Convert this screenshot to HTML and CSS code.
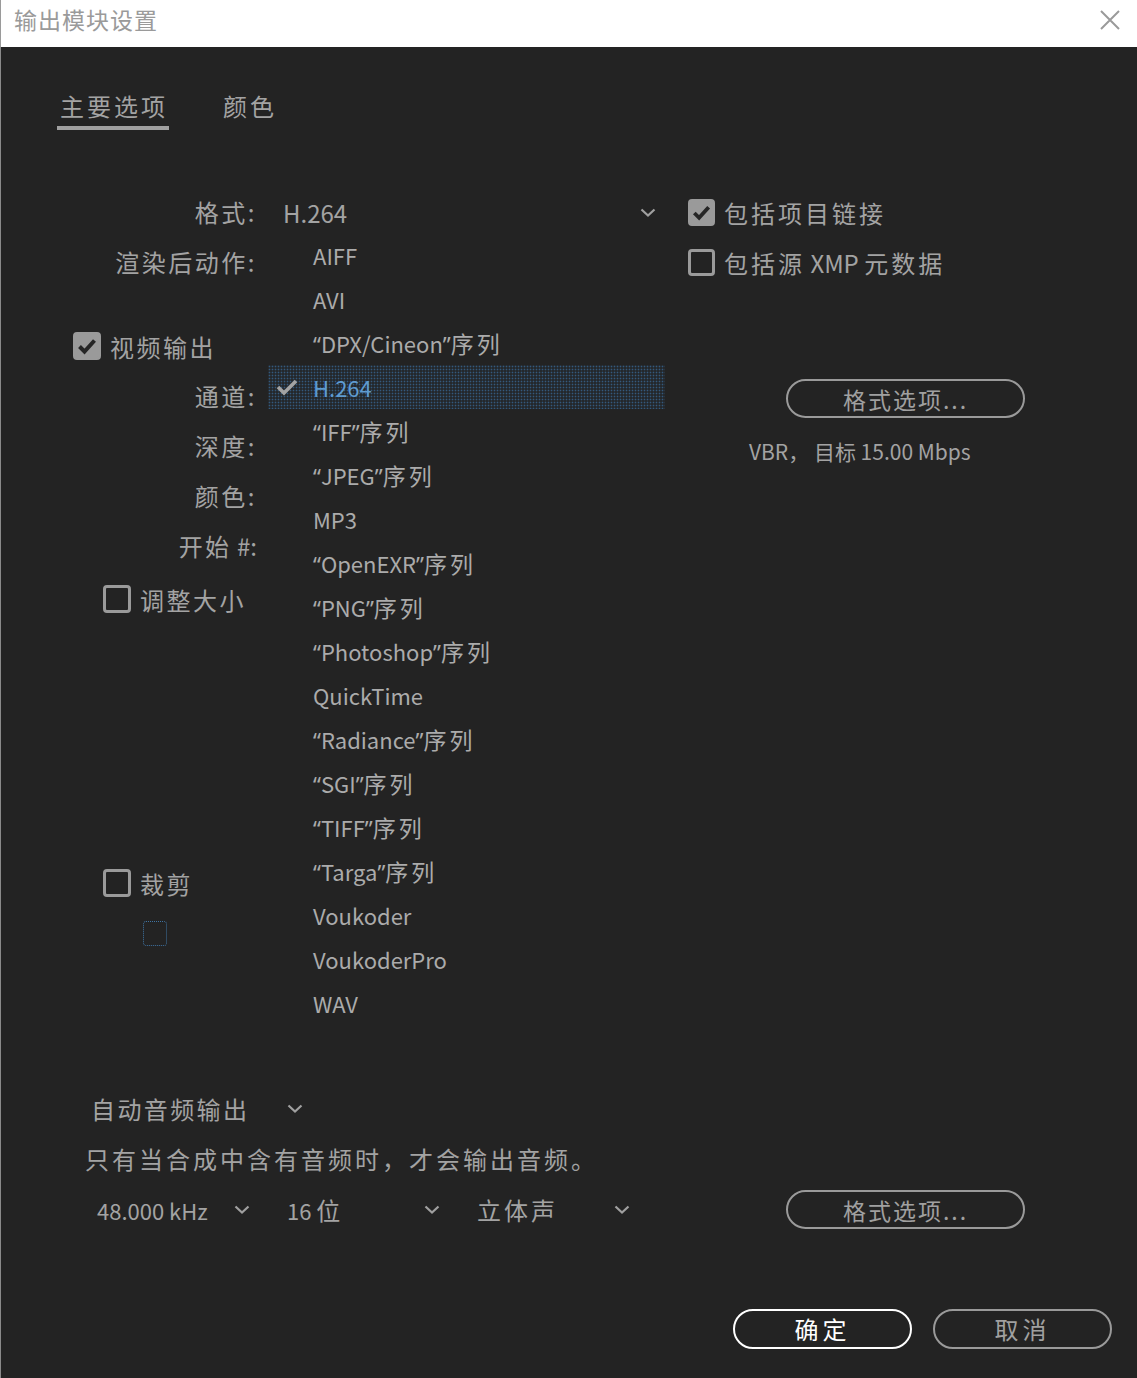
FILE: index.html
```html
<!DOCTYPE html>
<html lang="zh-CN">
<head>
<meta charset="utf-8">
<title>输出模块设置</title>
<link rel="stylesheet" href="styles.css">
</head>
<body>
<div class="titlebar">
  <span class="title">输出模块设置</span>
  <svg class="close" width="20" height="20" viewBox="0 0 20 20"><path d="M1 1L19 19M19 1L1 19" stroke="#9a9a9a" stroke-width="2" fill="none"/></svg>
</div>
<div class="main">
  <div class="tabs">
    <div class="tab active">主要选项</div>
    <div class="tab">颜色</div>
  </div>

  <div class="form">
    <div class="col-left">
      <div class="label r1">格式:</div>
      <div class="label">渲染后动作:</div>
      <div class="cbrow video"><span class="cb on"><svg width="22" height="22" viewBox="0 0 22 22"><path d="M3.5 11.5L8.5 16.5L18.5 5.5" stroke="#262626" stroke-width="4" fill="none"/></svg></span><span class="cjk">视频输出</span></div>
      <div class="label">通道:</div>
      <div class="label">深度:</div>
      <div class="label">颜色:</div>
      <div class="label">开始<span class="hash"> #:</span></div>
      <div class="cbrow resize"><span class="cb"></span><span class="cjk">调整大小</span></div>
      <div class="cbrow crop"><span class="cb"></span><span class="cjk">裁剪</span></div>
      <div class="dotbox"></div>
    </div>

    <div class="col-mid">
      <div class="select-row"><span class="latin">H.264</span>
        <svg class="chev" width="16" height="9" viewBox="0 0 16 9"><path d="M1.5 1.5L8 7.5L14.5 1.5" stroke="#a0a0a0" stroke-width="2.2" fill="none"/></svg>
      </div>
    </div>

    <div class="col-right">
      <div class="cbrow rcb"><span class="cb on small"><svg width="21" height="21" viewBox="0 0 22 22"><path d="M3.5 11.5L8.5 16.5L18.5 5.5" stroke="#262626" stroke-width="4" fill="none"/></svg></span><span class="cjk">包括项目链接</span></div>
      <div class="cbrow rcb"><span class="cb small"></span><span class="cjk">包括源<span class="lat"> XMP </span>元数据</span></div>
      <button class="btn fmt1">格式选项...</button>
      <div class="vbr">VBR， 目标 15.00 Mbps</div>
    </div>
  </div>

  <div class="audio">
    <div class="audio-head"><span class="ah-text">自动音频输出</span>
      <svg class="chev" width="16" height="9" viewBox="0 0 16 9"><path d="M1.5 1.5L8 7.5L14.5 1.5" stroke="#a0a0a0" stroke-width="2.2" fill="none"/></svg>
    </div>
    <div class="note">只有当合成中含有音频时，才会输出音频。</div>
    <div class="audio-row">
      <div class="dd"><span>48.000 kHz</span><svg class="chev" width="16" height="9" viewBox="0 0 16 9"><path d="M1.5 1.5L8 7.5L14.5 1.5" stroke="#a0a0a0" stroke-width="2.2" fill="none"/></svg></div>
      <div class="dd"><span>16 <span class="cjk">位</span></span><svg class="chev" width="16" height="9" viewBox="0 0 16 9"><path d="M1.5 1.5L8 7.5L14.5 1.5" stroke="#a0a0a0" stroke-width="2.2" fill="none"/></svg></div>
      <div class="dd"><span class="cjk">立体声</span><svg class="chev" width="16" height="9" viewBox="0 0 16 9"><path d="M1.5 1.5L8 7.5L14.5 1.5" stroke="#a0a0a0" stroke-width="2.2" fill="none"/></svg></div>
      <button class="btn fmt2">格式选项...</button>
    </div>
  </div>

  <div class="footer">
    <button class="btn ok">确定</button>
    <button class="btn cancel">取消</button>
  </div>
</div>

<ul class="menu">
  <li>AIFF</li>
  <li>AVI</li>
  <li><span class="q">“</span>DPX/Cineon<span class="q">”</span><span class="cj">序列</span></li>
  <li class="sel"><svg class="tick" width="22" height="18" viewBox="0 0 22 18"><path d="M2 9L8 15L20 3" stroke="#a3a3a3" stroke-width="3.6" fill="none"/></svg>H.264</li>
  <li><span class="q">“</span>IFF<span class="q">”</span><span class="cj">序列</span></li>
  <li><span class="q">“</span>JPEG<span class="q">”</span><span class="cj">序列</span></li>
  <li>MP3</li>
  <li><span class="q">“</span>OpenEXR<span class="q">”</span><span class="cj">序列</span></li>
  <li><span class="q">“</span>PNG<span class="q">”</span><span class="cj">序列</span></li>
  <li><span class="q">“</span>Photoshop<span class="q">”</span><span class="cj">序列</span></li>
  <li>QuickTime</li>
  <li><span class="q">“</span>Radiance<span class="q">”</span><span class="cj">序列</span></li>
  <li><span class="q">“</span>SGI<span class="q">”</span><span class="cj">序列</span></li>
  <li><span class="q">“</span>TIFF<span class="q">”</span><span class="cj">序列</span></li>
  <li><span class="q">“</span>Targa<span class="q">”</span><span class="cj">序列</span></li>
  <li>Voukoder</li>
  <li>VoukoderPro</li>
  <li>WAV</li>
</ul>
</body>
</html>
```

FILE: styles.css
```css
html, body {
  margin: 0;
  padding: 0;
}
body {
  width: 1137px;
  height: 1378px;
  background: #232323;
  font-family: "Noto Sans CJK SC", "Noto Sans", sans-serif;
  color: #a3a3a3;
  position: relative;
  overflow: hidden;
}
.titlebar {
  height: 47px;
  background: #ffffff;
  display: flex;
  align-items: center;
  justify-content: space-between;
  padding: 0 17px 0 14px;
  box-shadow: inset 1px 0 0 #9a9a9a;
}
.title {
  font-size: 23px;
  color: #9a9a9a;
  letter-spacing: 1px;
  line-height: 40px;
  margin-top: -9px;
}
.close {
  margin-top: -8px;
}
.main {
  height: 1331px;
  box-shadow: inset 1px 0 0 #8a8a8a;
  display: flex;
  flex-direction: column;
}
.tabs {
  display: flex;
  margin: 44px 0 0 57px;
  gap: 51px;
}
.tab {
  font-size: 24px;
  letter-spacing: 3px;
  line-height: 30px;
  padding: 0 0 5px 3px;
  border-bottom: 4px solid transparent;
  color: #a3a3a3;
}
.tab.active {
  border-bottom-color: #a0a0a0;
  padding-right: 1px;
}
.form {
  display: flex;
  margin-top: 57px;
}
.col-left {
  width: 255px;
  display: flex;
  flex-direction: column;
}
.label {
  height: 50px;
  line-height: 50px;
  text-align: right;
  font-size: 24px;
  letter-spacing: 2.5px;
  margin-right: -2px;
  white-space: nowrap;
}
.hash {
  letter-spacing: 0;
}
.cbrow {
  height: 50px;
  display: flex;
  align-items: center;
  gap: 9px;
  font-size: 24px;
  letter-spacing: 2.5px;
  white-space: nowrap;
}
.cbrow.video { margin-top: 34px; padding-left: 73px; }
.cbrow.resize { margin-top: 3px; padding-left: 103px; }
.cbrow.crop { margin-top: 234px; padding-left: 103px; }
.cb {
  width: 28px;
  height: 28px;
  box-sizing: border-box;
  border: 3px solid #9a9a9a;
  border-radius: 4px;
  display: flex;
  align-items: center;
  justify-content: center;
  flex: none;
}
.cb.small {
  width: 27px;
  height: 27px;
}
.cb.on {
  background: #9a9a9a;
}
.rcb .cjk {
  letter-spacing: 3px;
}
.lat {
  letter-spacing: 0;
}
.dotbox {
  margin: 13px 0 0 143px;
  width: 24px;
  height: 25px;
  box-sizing: border-box;
  border: 1px dotted #3f74a3;
  border-radius: 3px;
}
.col-mid {
  width: 410px;
}
.select-row {
  height: 50px;
  display: flex;
  align-items: center;
  justify-content: space-between;
  padding: 0 9px 0 28px;
  font-size: 24px;
}
.col-right {
  margin-left: 23px;
  display: flex;
  flex-direction: column;
  align-items: flex-start;
}
.rcb { gap: 9px; }
.btn {
  font-family: "Noto Sans CJK SC", "Noto Sans", sans-serif;
  background: transparent;
  color: #a0a0a0;
  border: 2px solid #9a9a9a;
  border-radius: 20px;
  font-size: 23px;
  letter-spacing: 2px;
  padding: 0;
  height: 39px;
  line-height: 34px;
}
.fmt1 {
  width: 239px;
  margin: 92px 0 0 98px;
}
.vbr {
  margin: 18px 0 0 61px;
  font-size: 21px;
  line-height: 30px;
  white-space: nowrap;
}
.audio {
  margin-top: 142px;
  display: flex;
  flex-direction: column;
}
.audio-head {
  height: 40px;
  display: flex;
  align-items: center;
  margin-left: 91px;
  font-size: 24px;
  letter-spacing: 2.4px;
}
.ah-text {
  width: 196px;
}
.note {
  height: 40px;
  line-height: 40px;
  margin: 11px 0 0 85px;
  font-size: 24px;
  letter-spacing: 3px;
}
.audio-row {
  margin-top: 11px;
  display: flex;
  align-items: center;
  padding-left: 97px;
}
.dd {
  width: 153px;
  margin-right: 37px;
  display: flex;
  align-items: center;
  justify-content: space-between;
  font-size: 22px;
  white-space: nowrap;
}
.dd .cjk {
  font-size: 24px;
  letter-spacing: 3px;
}
.dd:nth-child(3) {
  margin-right: 0;
}
.fmt2 {
  width: 239px;
  margin-left: 156px;
}
.footer {
  margin-top: 80px;
  display: flex;
  justify-content: flex-end;
  gap: 21px;
  padding-right: 25px;
}
.ok, .cancel {
  width: 179px;
  height: 40px;
  font-size: 24px;
  letter-spacing: 4px;
}
.ok {
  border: 2.5px solid #ffffff;
  color: #ffffff;
}
.menu {
  position: absolute;
  left: 268px;
  top: 233px;
  width: 397px;
  margin: 0;
  padding: 0;
  list-style: none;
}
.menu li {
  height: 44px;
  line-height: 44px;
  padding-left: 45px;
  font-size: 22px;
  color: #ababab;
  white-space: nowrap;
  position: relative;
}
.menu .q {
  font-family: "Noto Sans", "DejaVu Sans", sans-serif;
}
.menu .cj {
  font-size: 23px;
  letter-spacing: 3px;
}
.menu li.sel {
  color: #5f9bd0;
  background-color: #24282c;
  background-image: radial-gradient(circle, #33597d 0.7px, transparent 1.1px);
  background-size: 3px 3px;
}
.tick {
  position: absolute;
  left: 8px;
  top: 13px;
}
```
